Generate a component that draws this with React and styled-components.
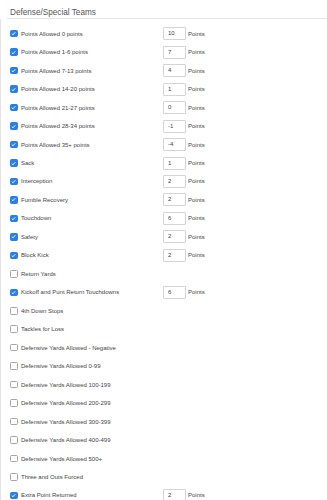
import { styled, createGlobalStyle } from "styled-components";

const GlobalStyle = createGlobalStyle`
    html, body {
        margin: 0;
        padding: 0;
        background: #fff;
    }
    body {
        font-family: "Liberation Sans", Arial, sans-serif;
    }
`;

const Page = styled.div`
    width: 327px;
    height: 500px;
    overflow: hidden;
`;

const Title = styled.h2`
    margin: 0 0 0 7px;
    padding: 8px 0 1px 3px;
    font-size: 8.2px;
    font-weight: normal;
    line-height: 9px;
    color: #555;
    border-bottom: 1px solid #e5e5e5;
`;

const List = styled.div`
    border-left: 1px solid #e4e4e4;
    padding-top: 5.5px;
    display: grid;
    grid-auto-rows: 18.48px;
`;

const Row = styled.div`
    display: flex;
    align-items: center;
    padding-left: 9px;
`;

const Box = styled.span`
    width: 7.5px;
    height: 7.5px;
    box-sizing: border-box;
    border-radius: 1.5px;
    display: flex;
    align-items: center;
    justify-content: center;
    flex-shrink: 0;
    ${props => props.checked ? `
        background: #2c7fe2;
        border: 1px solid #2c7fe2;
    ` : `
        background: #fff;
        border: 1px solid #a5a5a5;
    `}
`;

const Label = styled.span`
    width: 134px;
    margin-left: 3.5px;
    font-size: 6px;
    color: #444;
    white-space: nowrap;
`;

const Input = styled.div`
    width: 23px;
    height: 13px;
    box-sizing: border-box;
    border: 1px solid #d4d4d4;
    border-radius: 1px;
    margin-left: 8px;
    padding-left: 4px;
    font-size: 6px;
    line-height: 11px;
    color: #444;
`;

const Unit = styled.span`
    margin-left: 2px;
    font-size: 6px;
    color: #444;
`;

const rows = [
    ["Points Allowed 0 points", "10"],
    ["Points Allowed 1-6 points", "7"],
    ["Points Allowed 7-13 points", "4"],
    ["Points Allowed 14-20 points", "1"],
    ["Points Allowed 21-27 points", "0"],
    ["Points Allowed 28-34 points", "-1"],
    ["Points Allowed 35+ points", "-4"],
    ["Sack", "1"],
    ["Interception", "2"],
    ["Fumble Recovery", "2"],
    ["Touchdown", "6"],
    ["Safety", "2"],
    ["Block Kick", "2"],
    ["Return Yards", null],
    ["Kickoff and Punt Return Touchdowns", "6"],
    ["4th Down Stops", null],
    ["Tackles for Loss", null],
    ["Defensive Yards Allowed - Negative", null],
    ["Defensive Yards Allowed 0-99", null],
    ["Defensive Yards Allowed 100-199", null],
    ["Defensive Yards Allowed 200-299", null],
    ["Defensive Yards Allowed 300-399", null],
    ["Defensive Yards Allowed 400-499", null],
    ["Defensive Yards Allowed 500+", null],
    ["Three and Outs Forced", null],
    ["Extra Point Returned", "2"],
];

function Check() {
    return (
        <svg width="5" height="5" viewBox="0 0 10 10">
            <path d="M1.5 5.2 L4 7.6 L8.6 2.4" fill="none" stroke="#fff" strokeWidth="1.8" />
        </svg>
    )
}

export default function App() {
    return (
        <Page>
            <GlobalStyle />
            <Title>Defense/Special Teams</Title>
            <List>
                {rows.map(([label, value], i) => (
                    <Row key={i}>
                        <Box checked={value !== null}>{value !== null && <Check />}</Box>
                        <Label>{label}</Label>
                        {value !== null && <Input>{value}</Input>}
                        {value !== null && <Unit>Points</Unit>}
                    </Row>
                ))}
            </List>
        </Page>
    )
}
